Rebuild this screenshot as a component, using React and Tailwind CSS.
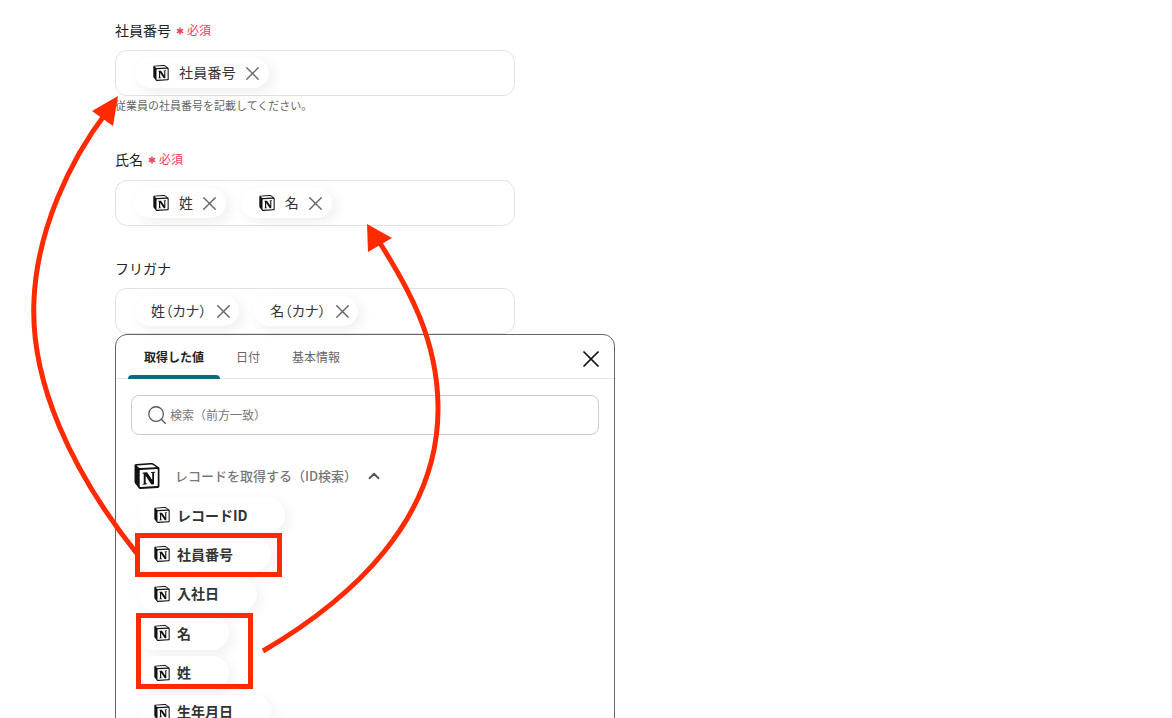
import React from 'react';
import { X, Search, ChevronUp, Asterisk } from 'lucide-react';
import { SiNotion } from 'react-icons/si';

const Chip = ({ label, notion = true }) => (
    <div className={`flex items-center h-[30px] pr-[4.5px] bg-white rounded-full shadow-[4px_4px_14px_rgba(0,0,0,0.07)] ${notion ? 'pl-[18px]' : 'pl-4'}`}>
        {notion && <SiNotion className="w-4 h-4 mr-[10px] text-[#111]" />}
        <span className="pb-[2px] text-[14px] leading-none text-[#333] [font-feature-settings:'palt'] tracking-[0.02em]">{label}</span>
        <X className="w-[23px] h-[23px] ml-[5px] text-[#666]" strokeWidth={1.4} />
    </div>
);

const Field = ({ label, required, hint, children, className, boxClass = 'mt-[10px]' }) => (
    <div className={className}>
        <div className="flex items-center h-[20px] text-[14px] text-[#222]">
            {label}
            {required && (
                <span className="flex items-center ml-[3px] text-[12px] text-[#f0405a]">
                    <Asterisk className="w-[12px] h-[12px] mr-[1px] mt-[2px]" strokeWidth={3} />
                    必須
                </span>
            )}
        </div>
        <div className={`flex items-center gap-[15px] w-[400px] h-[46px] px-[19px] border border-[#e2e2e2] rounded-xl bg-white ${boxClass}`}>
            {children}
        </div>
        {hint && <p className="h-[18px] text-[11px] leading-[18px] text-[#666]">{hint}</p>}
    </div>
);

const ListItem = ({ label, width }) => (
    <div className={`flex items-center h-[34px] pl-4 font-bold text-[14px] text-[#333] bg-white rounded-full shadow-[4px_4px_14px_rgba(0,0,0,0.06)] ${width}`}>
        <SiNotion className="w-4 h-4 mr-[7px] text-[#111]" />
        {label}
    </div>
);

const Overlay = () => (
    <svg className="absolute left-0 top-0 pointer-events-none" width="1172" height="718" viewBox="0 0 1172 718" fill="none">
        <path d="M138 555 C 70 470, 30 380, 34 300 C 37 230, 70 160, 106 113" stroke="#ff2a00" strokeWidth="5" />
        <polygon points="118,96 92,111 113,126" fill="#ff2a00" />
        <path d="M263 651 C 350 600, 440 520, 438 405 C 437 340, 410 290, 378 240" stroke="#ff2a00" strokeWidth="5" />
        <polygon points="367,224 368,252 392,238" fill="#ff2a00" />
    </svg>
);

const App = () => {
    return (
        <div className="relative h-[718px] w-full overflow-hidden bg-white pl-[115px] pt-[20px] font-['Noto_Sans_CJK_JP','Noto_Sans',sans-serif]">
            <Field label="社員番号" required hint="従業員の社員番号を記載してください。">
                <Chip label="社員番号" />
            </Field>
            <Field label="氏名" required className="mt-[35px]" boxClass="mt-[11px]">
                <Chip label="姓" />
                <Chip label="名" />
            </Field>
            <Field label="フリガナ" className="mt-[32px]">
                <Chip label="姓（カナ）" notion={false} />
                <Chip label="名（カナ）" notion={false} />
            </Field>

            <div className="w-[500px] h-[500px] border border-[#666] rounded-t-xl bg-white">
                <div className="relative flex h-[44px] border-b border-[#e6e6e6] pl-[12px]">
                    <div className="relative flex items-center justify-center w-[92px] h-[44px] text-[12px] font-bold text-[#222]">
                        取得した値
                        <div className="absolute left-0 right-0 bottom-0 h-[4px] bg-[#0b6a80] rounded-t-md" />
                    </div>
                    <div className="flex items-center ml-[16px] text-[12px] text-[#666]">日付</div>
                    <div className="flex items-center ml-[32px] text-[12px] text-[#666]">基本情報</div>
                    <X className="absolute right-[9px] top-[10px] w-[28px] h-[28px] text-[#111]" strokeWidth={1.5} />
                </div>

                <div className="flex items-center w-[468px] h-[40px] ml-[15px] mt-[16px] pl-[14px] border border-[#ccc] rounded-lg">
                    <Search className="w-[22px] h-[22px] text-[#555]" strokeWidth={1.4} />
                    <span className="ml-[2px] text-[12px] text-[#777]">検索（前方一致）</span>
                </div>

                <div className="flex items-center ml-[18px] mt-[25px] h-[32px]">
                    <SiNotion className="w-[26px] h-[26px] text-[#111]" />
                    <span className="ml-[15px] text-[13px] font-medium text-[#777]">レコードを取得する（ID検索）</span>
                    <ChevronUp className="ml-[8px] w-[18px] h-[18px] text-[#555]" strokeWidth={2.4} />
                </div>

                <div className="flex flex-col gap-[5.4px] ml-[22px] mt-[6px]">
                    <ListItem label="レコードID" width="w-[147px]" />
                    <ListItem label="社員番号" width="w-[133px]" />
                    <ListItem label="入社日" width="w-[119px]" />
                    <ListItem label="名" width="w-[91px]" />
                    <ListItem label="姓" width="w-[91px]" />
                    <ListItem label="生年月日" width="w-[133px]" />
                </div>
            </div>

            <div className="absolute left-[135px] top-[533px] w-[147px] h-[44px] border-[5px] border-[#ff2a00]" />
            <div className="absolute left-[136px] top-[613px] w-[117px] h-[76px] border-[5px] border-[#ff2a00]" />
            <Overlay />
        </div>
    );
};

export default App;
